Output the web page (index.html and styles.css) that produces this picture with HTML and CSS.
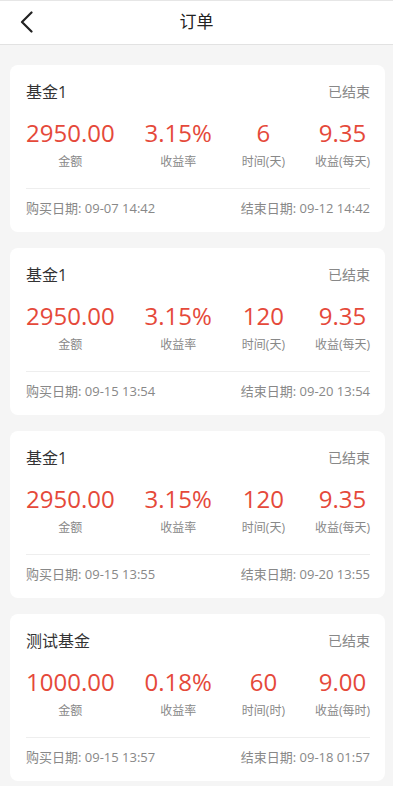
FILE: index.html
```html
<!DOCTYPE html>
<html lang="zh-CN">
<head>
<meta charset="utf-8">
<meta name="viewport" content="width=device-width, initial-scale=1">
<title>订单</title>
<link rel="stylesheet" href="styles.css">
</head>
<body>
<header class="nav">
  <span class="back">
    <svg width="14" height="22" viewBox="0 0 14 22"><path d="M11.5 1.5 L2 11 L11.5 20.5" fill="none" stroke="#222" stroke-width="2.2" stroke-linecap="round" stroke-linejoin="round"/></svg>
  </span>
  <h1 class="nav-title">订单</h1>
</header>
<main class="list">
  <section class="card">
    <div class="card-head"><span class="name">基金1</span><span class="status">已结束</span></div>
    <div class="stats">
      <div class="stat"><div class="num">2950.00</div><div class="lbl">金额</div></div>
      <div class="stat"><div class="num">3.15%</div><div class="lbl">收益率</div></div>
      <div class="stat"><div class="num">6</div><div class="lbl">时间(天)</div></div>
      <div class="stat"><div class="num">9.35</div><div class="lbl">收益(每天)</div></div>
    </div>
    <div class="dates"><span>购买日期: 09-07 14:42</span><span>结束日期: 09-12 14:42</span></div>
  </section>
  <section class="card">
    <div class="card-head"><span class="name">基金1</span><span class="status">已结束</span></div>
    <div class="stats">
      <div class="stat"><div class="num">2950.00</div><div class="lbl">金额</div></div>
      <div class="stat"><div class="num">3.15%</div><div class="lbl">收益率</div></div>
      <div class="stat"><div class="num">120</div><div class="lbl">时间(天)</div></div>
      <div class="stat"><div class="num">9.35</div><div class="lbl">收益(每天)</div></div>
    </div>
    <div class="dates"><span>购买日期: 09-15 13:54</span><span>结束日期: 09-20 13:54</span></div>
  </section>
  <section class="card">
    <div class="card-head"><span class="name">基金1</span><span class="status">已结束</span></div>
    <div class="stats">
      <div class="stat"><div class="num">2950.00</div><div class="lbl">金额</div></div>
      <div class="stat"><div class="num">3.15%</div><div class="lbl">收益率</div></div>
      <div class="stat"><div class="num">120</div><div class="lbl">时间(天)</div></div>
      <div class="stat"><div class="num">9.35</div><div class="lbl">收益(每天)</div></div>
    </div>
    <div class="dates"><span>购买日期: 09-15 13:55</span><span>结束日期: 09-20 13:55</span></div>
  </section>
  <section class="card">
    <div class="card-head"><span class="name">测试基金</span><span class="status">已结束</span></div>
    <div class="stats">
      <div class="stat"><div class="num">1000.00</div><div class="lbl">金额</div></div>
      <div class="stat"><div class="num">0.18%</div><div class="lbl">收益率</div></div>
      <div class="stat"><div class="num">60</div><div class="lbl">时间(时)</div></div>
      <div class="stat"><div class="num">9.00</div><div class="lbl">收益(每时)</div></div>
    </div>
    <div class="dates"><span>购买日期: 09-15 13:57</span><span>结束日期: 09-18 01:57</span></div>
  </section>
</main>
</body>
</html>
```
FILE: styles.css
```css
* { box-sizing: border-box; }
html, body { margin: 0; padding: 0; }
body {
  background: #f5f5f5;
  font-family: "Open Sans", "Noto Sans CJK SC", sans-serif;
  color: #333;
}
.nav {
  position: relative;
  height: 45px;
  background: #fff;
  border-top: 1px solid #e6e6e6;
  border-bottom: 1px solid #e2e2e2;
  display: flex;
  align-items: center;
  justify-content: center;
}
.back {
  position: absolute;
  left: 20px;
  top: 10px;
  width: 14px;
  height: 22px;
  display: block;
}
.back svg { display: block; }
.nav-title {
  margin: 0;
  font-size: 17px;
  font-weight: 400;
  color: #222;
  line-height: 24px;
  margin-top: -2px;
}
.list {
  padding: 20px 8px 16px 10px;
  display: flex;
  flex-direction: column;
  gap: 16px;
}
.card {
  background: #fff;
  border-radius: 8px;
  padding: 16px 15px 15px 16px;
}
.card-head {
  display: flex;
  justify-content: space-between;
  align-items: center;
  height: 22px;
}
.name { font-size: 16px; color: #333; line-height: 22px; }
.status { font-size: 14px; color: #888; line-height: 22px; }
.stats {
  display: flex;
  justify-content: space-between;
  margin-top: 14px;
  padding-bottom: 17px;
  border-bottom: 1px solid #eee;
}
.stat { text-align: center; }
.num {
  font-size: 24px;
  line-height: 32px;
  color: #e5493a;
}
.lbl {
  margin-top: 4px;
  font-size: 12px;
  line-height: 18px;
  color: #888;
}
.dates {
  display: flex;
  justify-content: space-between;
  padding-top: 10px;
  font-size: 13px;
  line-height: 18px;
  color: #888;
}
```
